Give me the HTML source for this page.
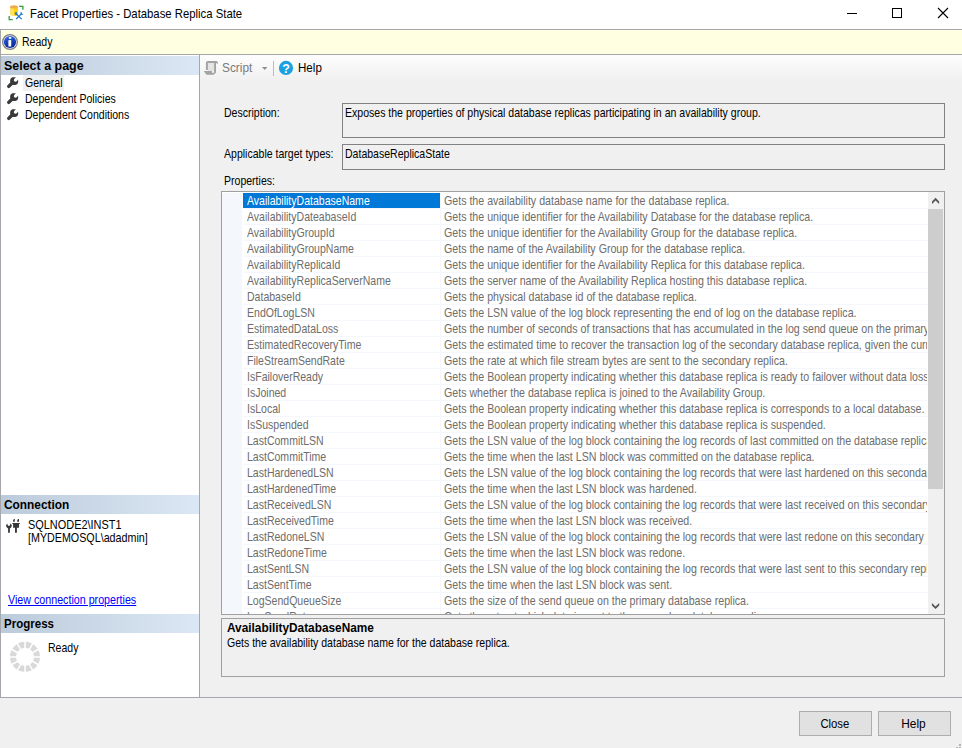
<!DOCTYPE html>
<html>
<head>
<meta charset="utf-8">
<title>Facet Properties - Database Replica State</title>
<style>
*{box-sizing:border-box;margin:0;padding:0}
html,body{width:962px;height:748px;overflow:hidden;background:#f0f0f0}
body{position:relative;font-family:"Liberation Sans",sans-serif;font-size:12.4px;color:#000}
.abs{position:absolute}
.t{position:absolute;white-space:nowrap;line-height:16px;transform:scaleX(.85);transform-origin:0 0}
.ui{font-size:12.8px;transform:scaleX(.885)}
svg{position:absolute;overflow:visible}
#titlebar{left:0;top:0;width:962px;height:29px;background:#fff}
#infobar{left:0;top:29px;width:962px;height:26px;background:#ffffe1;border-top:1px solid #a5a7ad;border-bottom:1px solid #a5a7ad;border-left:1px solid #a5a7ad}
#left{left:0;top:55px;width:200px;height:642px;background:#fff;border-left:1px solid #a5a7ad;border-right:1px solid #a5a7ad}
.hdr{position:absolute;left:1px;width:198px;height:19px;background:linear-gradient(to right,#bccbdb,#dbe7f4);font-weight:bold}
.hdr span{position:absolute;left:3px;top:2px;line-height:16px;white-space:nowrap;transform:scaleX(.987);transform-origin:0 0}
#right{left:200px;top:55px;width:762px;height:642px;background:linear-gradient(to bottom,#fdfdfd 0,#f0f0f0 27px,#f0f0f0 100%)}
#bottomline{left:0;top:697px;width:962px;height:1px;background:#a5a7ad}
.box{position:absolute;border:1px solid #828282;background:#f0f0f0}
.btn{position:absolute;height:25px;width:73px;top:711px;border:1px solid #adadad;background:#e1e1e1;text-align:center;font-size:12.8px;line-height:23px}
.btn span{display:inline-block;transform:scaleX(.885)}
.sel0{left:23px;top:75px;width:41px;height:16px;background:#f0f0f0}
#grid{left:221px;top:191px;width:724px;height:424px;border:1px solid #a0a0a0;background:#fff;overflow:hidden}
#gmargin{left:0;top:1px;width:20px;height:421px;background:#f4f7fc}
.row{position:absolute;left:21px;width:684px;height:16px;border-bottom:1px solid #f4f7fc;color:#6d6d6d;white-space:nowrap;overflow:hidden}
.row .n{position:absolute;left:0;top:0;width:197px;height:15px;padding-left:4px;line-height:17px;overflow:hidden}
.row span{display:inline-block;transform:scaleX(.85);transform-origin:0 0}
.row .d span{transform:scaleX(.858)}
.row .d{position:absolute;left:197px;top:0;width:487px;height:15px;padding-left:3px;line-height:17px;overflow:hidden;border-left:1px solid #f4f7fc}
.row.sel .n{background:#0078d7;color:#fff}
#sb{left:706px;top:0;width:16px;height:422px;background:#f0f0f0}
#thumb{left:0;top:17px;width:15px;height:280px;background:#cdcdcd}
a.lnk{color:#0000ff;text-decoration:underline}
</style>
</head>
<body>
<div id="titlebar" class="abs"></div>
<svg id="ticon" style="left:8px;top:5px" width="16" height="16" viewBox="0 0 16 16">
<path d="M2 1.900 V9.200 Q2 10.800 5.950 10.800 Q9.900 10.800 9.900 9.200 V1.900z" fill="#fde26a"/>
<path d="M5.950 1.900 V10.800 Q9.900 10.800 9.900 9.200 V1.900z" fill="#fdd40a"/>
<ellipse cx="5.950" cy="1.900" rx="3.950" ry="1.700" fill="#f0a94f"/>
<path d="M11.100 1.450 H14.900 V4.800 M1.200 11.100 V14.600 H4.800" fill="none" stroke="#3a9a3c" stroke-width="1.300"/>
<path d="M7.600 8.400 L13.700 14.100 M13.600 8.600 L8.200 14" fill="none" stroke="#1f78d1" stroke-width="1.300"/>
<path d="M6.500 8.600 L8.200 6.600 L9.400 9.300 L7.900 10.300z" fill="#1f78d1"/>
<path d="M12.400 7.300 Q12.200 9 13.400 9.700 Q14.600 10 15.400 9.200 L14.200 8.700 L13.900 7.600z" fill="#1f78d1"/>
</svg>
<div class="t ui" style="left:30px;top:6px;line-height:16px">Facet Properties - Database Replica State</div>
<svg style="left:846px;top:8px" width="104" height="12" viewBox="0 0 104 12" fill="none" stroke="#000" stroke-width="1">
<path d="M1 5.500 h10"/>
<rect x="46.500" y="0.500" width="9" height="9"/>
<path d="M92 0 l10 10 M102 0 l-10 10" stroke-width="1.100"/>
</svg>
<div id="infobar" class="abs"></div>
<svg style="left:2px;top:34px" width="16" height="16" viewBox="0 0 16 16">
<defs><linearGradient id="ig" x1="0" y1="0" x2="0.300" y2="1"><stop offset="0" stop-color="#3f76e6"/><stop offset="0.500" stop-color="#1a46c4"/><stop offset="1" stop-color="#0b2a9c"/></linearGradient></defs>
<circle cx="8" cy="8" r="7.400" fill="#e2e2ea" stroke="#808088" stroke-width="1.200"/>
<circle cx="8" cy="8" r="6.100" fill="url(#ig)"/>
<rect x="6.900" y="3" width="2.300" height="1.800" fill="#fff"/>
<rect x="6.400" y="6.100" width="2.800" height="6.400" fill="#fff"/>
</svg>
<div class="t" style="left:22px;top:34px">Ready</div>

<div id="left" class="abs"></div>
<div class="hdr" style="top:56px"><span style="transform:scaleX(1.005)">Select a page</span></div>
<div class="abs sel0"></div>
<svg class="wr" style="left:6.900px;top:76.800px" width="11.200" height="11.200" viewBox="0 0 11.200 11.200"><path d="M8.900 0.300 L5.400 0.300 Q3.100 1.200 3.100 3.200 L3.200 5.600 L0.300 8.600 Q-0.400 9.600 0.500 10.600 Q1.600 11.600 2.700 10.800 L5.600 7.900 L8.400 7.900 Q11.200 7.400 11.200 4.800 L11.100 2.400 L9.800 4.300 Q8.400 5.200 7.300 4.300 Q6.300 3.200 7.200 2z" fill="#3a3a3a"/></svg>
<svg class="wr" style="left:6.900px;top:92.800px" width="11.200" height="11.200" viewBox="0 0 11.200 11.200"><path d="M8.900 0.300 L5.400 0.300 Q3.100 1.200 3.100 3.200 L3.200 5.600 L0.300 8.600 Q-0.400 9.600 0.500 10.600 Q1.600 11.600 2.700 10.800 L5.600 7.900 L8.400 7.900 Q11.200 7.400 11.200 4.800 L11.100 2.400 L9.800 4.300 Q8.400 5.200 7.300 4.300 Q6.300 3.200 7.200 2z" fill="#3a3a3a"/></svg>
<svg class="wr" style="left:6.900px;top:108.800px" width="11.200" height="11.200" viewBox="0 0 11.200 11.200"><path d="M8.900 0.300 L5.400 0.300 Q3.100 1.200 3.100 3.200 L3.200 5.600 L0.300 8.600 Q-0.400 9.600 0.500 10.600 Q1.600 11.600 2.700 10.800 L5.600 7.900 L8.400 7.900 Q11.200 7.400 11.200 4.800 L11.100 2.400 L9.800 4.300 Q8.400 5.200 7.300 4.300 Q6.300 3.200 7.200 2z" fill="#3a3a3a"/></svg>
<div class="t" style="left:25px;top:75px">General</div>
<div class="t" style="left:25px;top:91px">Dependent Policies</div>
<div class="t" style="left:25px;top:107px">Dependent Conditions</div>

<div class="hdr" style="top:495px"><span style="transform:scaleX(.957)">Connection</span></div>
<svg style="left:6px;top:519px" width="14" height="14" viewBox="0 0 14 14" fill="#383838">
<path d="M1.100 4.600 L0 6.500 Q0.200 8.600 2.100 9.400 V13.800 H3.900 V9.400 Q5.800 8.600 5.800 6.300 L4.500 4.200 L3.900 6.300 Q2.900 7.400 1.900 6.400z"/>
<path d="M7.100 2.700 V1.300 L8 0 H8.800 V2.700z M11.200 2.700 V1.300 L12.100 0 H13 V2.700z M6.100 4 H14 V4.800 H13 V8.800 H10.900 V13.800 H9 V8.800 H7.100 V4.800 H6.100z"/>
</svg>
<div class="t" style="left:28px;top:517px;transform:scaleX(.882)">SQLNODE2\INST1</div>
<div class="t" style="left:28px;top:530px;transform:scaleX(.865)">[MYDEMOSQL\adadmin]</div>
<div class="t" style="left:8px;top:592px;transform:scaleX(.863)"><a class="lnk">View connection properties</a></div>
<div class="hdr" style="top:614px"><span style="transform:scaleX(.93)">Progress</span></div>
<svg style="left:10px;top:642px" width="30" height="30" viewBox="-15 -15 30 30">
<circle cx="0" cy="-0.150" r="12.050" fill="none" stroke="#d9d9d9" stroke-width="5.900"/>
<g stroke="#fff" stroke-width="1.500">
<path d="M0 -16 V16"/><path d="M0 -16 V16" transform="rotate(30)"/><path d="M0 -16 V16" transform="rotate(60)"/><path d="M0 -16 V16" transform="rotate(90)"/><path d="M0 -16 V16" transform="rotate(120)"/><path d="M0 -16 V16" transform="rotate(150)"/>
</g></svg>
<div class="t" style="left:48px;top:640px">Ready</div>

<div id="right" class="abs"></div>
<svg style="left:204px;top:61px" width="14" height="14" viewBox="0 0 14 14">
<rect x="3.900" y="1.900" width="6.200" height="8.200" fill="#e4e4e4"/>
<g fill="#a3a3a3">
<path d="M1.900 9.100 V2 Q1.900 0 3.900 0 H12.600 L13.800 1 V2.900 L12 1.900 H3.900 V9.100z"/>
<rect x="10.100" y="1.900" width="1.900" height="10"/>
<path d="M0 10.100 H7.900 V11.700 H12 V11.800 L9.500 13.800 H2.500 L0 10.600z"/>
</g></svg>
<div class="t ui" style="left:222px;top:60px;line-height:16px;color:#7a7a7a;transform:scaleX(.925)">Script</div>
<svg style="left:262px;top:67px" width="6" height="4" viewBox="0 0 6 4"><path d="M0 0 h5.400 l-2.700 3.100z" fill="#8f8f8f"/></svg>
<div class="abs" style="left:273px;top:61px;width:1px;height:15px;background:#bdbdbd"></div>
<svg style="left:279px;top:61px" width="14" height="14" viewBox="0 0 14 14">
<circle cx="7" cy="6.900" r="7.100" fill="#1ba1e2"/>
<text x="7" y="11.800" text-anchor="middle" font-family="Liberation Sans, sans-serif" font-weight="bold" font-size="12.500" fill="#fff">?</text>
</svg>
<div class="t ui" style="left:298px;top:60px;line-height:16px;transform:scaleX(.905)">Help</div>

<div class="t" style="left:224px;top:105px">Description:</div>
<div class="box" style="left:342px;top:103px;width:603px;height:35px"></div>
<div class="t" style="left:345px;top:105px">Exposes the properties of physical database replicas participating in an availability group.</div>
<div class="t" style="left:224px;top:146px">Applicable target types:</div>
<div class="box" style="left:342px;top:144px;width:603px;height:26px"></div>
<div class="t" style="left:345px;top:146px">DatabaseReplicaState</div>
<div class="t" style="left:224px;top:173px">Properties:</div>

<div id="grid" class="abs">
<div id="gmargin" class="abs"></div>
<div class="row sel" style="top:1px"><div class="n"><span>AvailabilityDatabaseName</span></div><div class="d"><span>Gets the availability database name for the database replica.</span></div></div>
<div class="row" style="top:17px"><div class="n"><span>AvailabilityDateabaseId</span></div><div class="d"><span>Gets the unique identifier for the Availability Database for the database replica.</span></div></div>
<div class="row" style="top:33px"><div class="n"><span>AvailabilityGroupId</span></div><div class="d"><span>Gets the unique identifier for the Availability Group for the database replica.</span></div></div>
<div class="row" style="top:49px"><div class="n"><span>AvailabilityGroupName</span></div><div class="d"><span>Gets the name of the Availability Group for the database replica.</span></div></div>
<div class="row" style="top:65px"><div class="n"><span>AvailabilityReplicaId</span></div><div class="d"><span>Gets the unique identifier for the Availability Replica for this database replica.</span></div></div>
<div class="row" style="top:81px"><div class="n"><span>AvailabilityReplicaServerName</span></div><div class="d"><span>Gets the server name of the Availability Replica hosting this database replica.</span></div></div>
<div class="row" style="top:97px"><div class="n"><span>DatabaseId</span></div><div class="d"><span>Gets the physical database id of the database replica.</span></div></div>
<div class="row" style="top:113px"><div class="n"><span>EndOfLogLSN</span></div><div class="d"><span>Gets the LSN value of the log block representing the end of log on the database replica.</span></div></div>
<div class="row" style="top:129px"><div class="n"><span>EstimatedDataLoss</span></div><div class="d"><span>Gets the number of seconds of transactions that has accumulated in the log send queue on the primary database replica.</span></div></div>
<div class="row" style="top:145px"><div class="n"><span>EstimatedRecoveryTime</span></div><div class="d"><span>Gets the estimated time to recover the transaction log of the secondary database replica, given the current redo rate.</span></div></div>
<div class="row" style="top:161px"><div class="n"><span>FileStreamSendRate</span></div><div class="d"><span>Gets the rate at which file stream bytes are sent to the secondary replica.</span></div></div>
<div class="row" style="top:177px"><div class="n"><span>IsFailoverReady</span></div><div class="d"><span>Gets the Boolean property indicating whether this database replica is ready to failover without data loss.</span></div></div>
<div class="row" style="top:193px"><div class="n"><span>IsJoined</span></div><div class="d"><span>Gets whether the database replica is joined to the Availability Group.</span></div></div>
<div class="row" style="top:209px"><div class="n"><span>IsLocal</span></div><div class="d"><span>Gets the Boolean property indicating whether this database replica is corresponds to a local database.</span></div></div>
<div class="row" style="top:225px"><div class="n"><span>IsSuspended</span></div><div class="d"><span>Gets the Boolean property indicating whether this database replica is suspended.</span></div></div>
<div class="row" style="top:241px"><div class="n"><span>LastCommitLSN</span></div><div class="d"><span>Gets the LSN value of the log block containing the log records of last committed on the database replica.</span></div></div>
<div class="row" style="top:257px"><div class="n"><span>LastCommitTime</span></div><div class="d"><span>Gets the time when the last LSN block was committed on the database replica.</span></div></div>
<div class="row" style="top:273px"><div class="n"><span>LastHardenedLSN</span></div><div class="d"><span>Gets the LSN value of the log block containing the log records that were last hardened on this secondary replica.</span></div></div>
<div class="row" style="top:289px"><div class="n"><span>LastHardenedTime</span></div><div class="d"><span>Gets the time when the last LSN block was hardened.</span></div></div>
<div class="row" style="top:305px"><div class="n"><span>LastReceivedLSN</span></div><div class="d"><span>Gets the LSN value of the log block containing the log records that were last received on this secondary replica.</span></div></div>
<div class="row" style="top:321px"><div class="n"><span>LastReceivedTime</span></div><div class="d"><span>Gets the time when the last LSN block was received.</span></div></div>
<div class="row" style="top:337px"><div class="n"><span>LastRedoneLSN</span></div><div class="d"><span>Gets the LSN value of the log block containing the log records that were last redone on this secondary replica.</span></div></div>
<div class="row" style="top:353px"><div class="n"><span>LastRedoneTime</span></div><div class="d"><span>Gets the time when the last LSN block was redone.</span></div></div>
<div class="row" style="top:369px"><div class="n"><span>LastSentLSN</span></div><div class="d"><span>Gets the LSN value of the log block containing the log records that were last sent to this secondary replica.</span></div></div>
<div class="row" style="top:385px"><div class="n"><span>LastSentTime</span></div><div class="d"><span>Gets the time when the last LSN block was sent.</span></div></div>
<div class="row" style="top:401px"><div class="n"><span>LogSendQueueSize</span></div><div class="d"><span>Gets the size of the send queue on the primary database replica.</span></div></div>
<div class="row" style="top:417px"><div class="n"><span>LogSendRate</span></div><div class="d"><span>Gets the rate at which data is sent to the secondary database replica.</span></div></div>
<div id="sb" class="abs">
<div id="thumb" class="abs"></div>
<svg style="left:0;top:0" width="16" height="422" viewBox="0 0 16 422"><path d="M4 9.400 L7.550 5.800 L11.100 9.400 V11.900 L7.550 8.400 L4 11.900z M3.900 411 L7.550 414.500 L11.200 411 V413.400 L7.550 417 L3.900 413.400z" fill="#555"/></svg>
</div>

</div>
<div class="box" style="left:221px;top:618px;width:724px;height:59px;border-color:#a0a0a0"></div>
<div class="t" style="left:227px;top:620px;font-weight:bold;transform:scaleX(.955)">AvailabilityDatabaseName</div>
<div class="t" style="left:227px;top:635px">Gets the availability database name for the database replica.</div>
<div id="bottomline" class="abs"></div>
<div class="btn" style="left:799px"><span style="transform:translateX(-0.500px) scaleX(.885)">Close</span></div>
<div class="btn" style="left:878px"><span style="transform:translateX(-0.700px) scaleX(.93)">Help</span></div>
<svg style="left:950px;top:736px" width="12" height="12" viewBox="0 0 12 12" fill="#b4b4b4"><rect x="9" y="8" width="2" height="2"/><rect x="6" y="11" width="2" height="2"/><rect x="9" y="11" width="2" height="2"/></svg>

</body>
</html>
